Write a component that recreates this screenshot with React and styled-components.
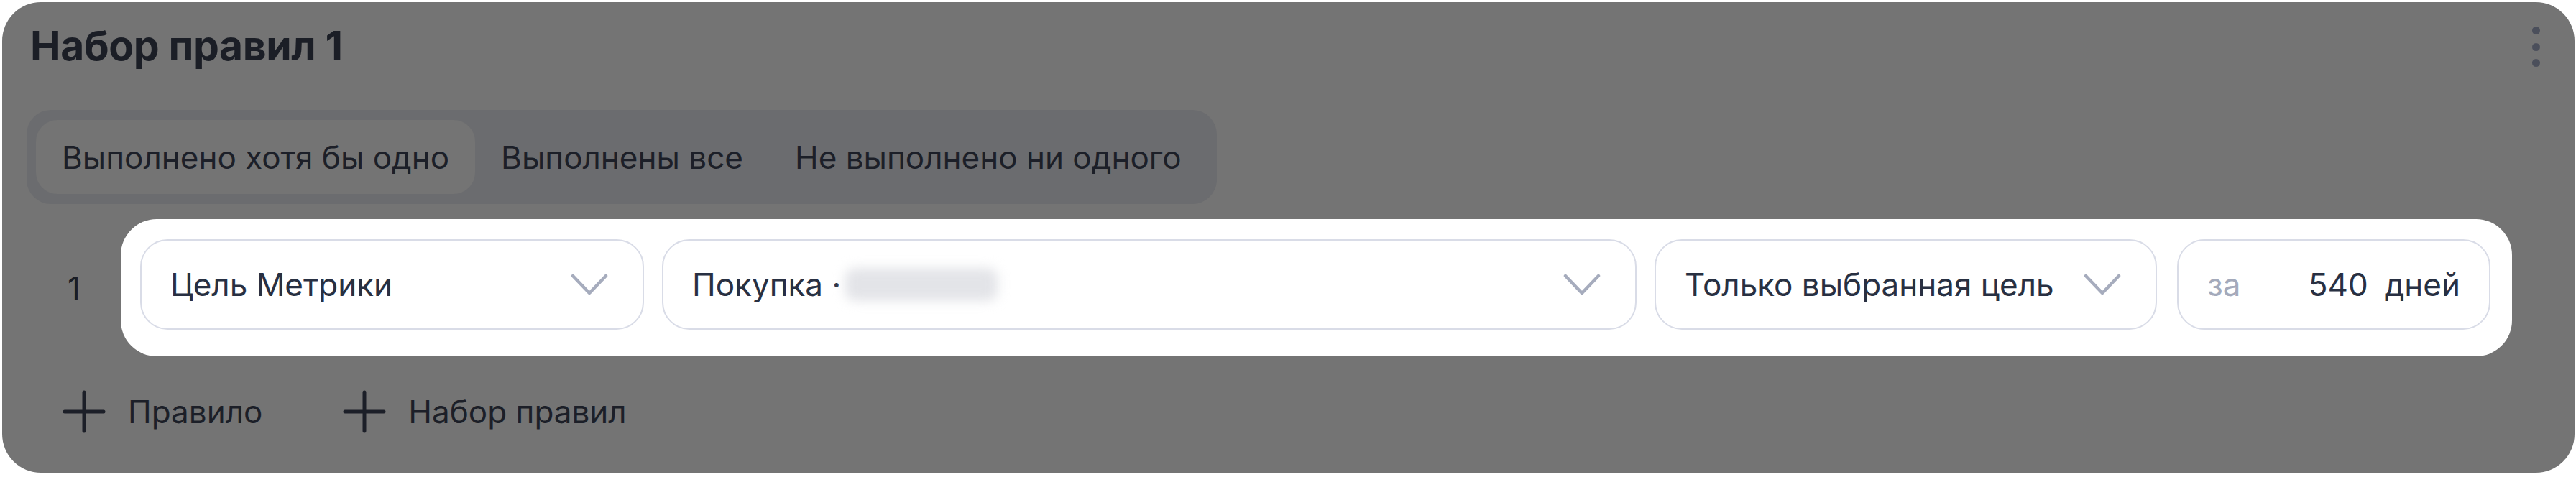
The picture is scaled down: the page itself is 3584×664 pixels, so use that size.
import React from "react";
import styled, { createGlobalStyle } from "styled-components";

const GlobalStyle = createGlobalStyle`
  html, body { margin: 0; padding: 0; background: #ffffff; }
  body { font-family: Inter, "Noto Sans", sans-serif; }
  * { box-sizing: border-box; }
`;

const Page = styled.div`
  padding: 3px 2px 0 3px;
`;

const Card = styled.section`
  height: 655px;
  background: #747474;
  border-radius: 54px;
  padding: 24px 34px 0 34px;
  display: flex;
  flex-direction: column;
`;

const Header = styled.div`
  height: 72px;
  display: flex;
  align-items: center;
  justify-content: space-between;
  padding-left: 5px;
  padding-right: 14px;
`;

const Title = styled.h2`
  margin: 0;
  font-size: 57px;
  font-weight: 700;
  letter-spacing: -0.4px;
  color: #1b1e26;
`;

const Kebab = styled.button`
  border: 0;
  background: transparent;
  padding: 0;
  width: 12px;
  height: 56px;
  display: flex;
  flex-direction: column;
  justify-content: space-between;
  align-items: center;
  margin-top: 4px;
`;

const Dot = styled.span`
  width: 11px;
  height: 11px;
  border-radius: 50%;
  background: #4b4f5b;
`;

const TabGroup = styled.div`
  margin-top: 54px;
  align-self: flex-start;
  display: flex;
  padding: 14px 13px;
  background: #6b6c6f;
  border-radius: 34px;
`;

const Tab = styled.button`
  height: 103px;
  padding: 0 36px;
  border: 0;
  border-radius: 30px;
  background: ${(p) => (p.$active ? "#747474" : "transparent")};
  font-family: Inter, "Noto Sans", sans-serif;
  font-size: 44px;
  color: #1c1f28;
  white-space: nowrap;
`;

const RuleLine = styled.div`
  margin-top: 21px;
  display: flex;
  align-items: center;
`;

const RuleNumber = styled.div`
  width: 131px;
  padding-left: 57px;
  font-size: 44px;
  color: #1a1d24;
`;

const Spotlight = styled.div`
  flex: 1;
  margin-right: 53px;
  background: #ffffff;
  border-radius: 50px;
  padding: 28px 30px 37px 27px;
  display: flex;
  gap: 25px;
`;

const Select = styled.div`
  height: 126px;
  flex: ${(p) => (p.$grow ? "1" : `0 0 ${p.$width}px`)};
  border: 2px solid #d9dce7;
  border-radius: 38px;
  display: flex;
  align-items: center;
  padding: 0 48px 0 40px;
  gap: 12px;
  font-size: 44px;
  color: #283042;
  white-space: nowrap;
`;

const SelectText = styled.span`
  flex: 1;
  display: flex;
  align-items: center;
  gap: 6px;
`;

const Hidden = styled.span`
  display: inline-block;
  width: 212px;
  height: 46px;
  border-radius: 14px;
  background: #e3e4e8;
  filter: blur(8px);
`;

const Chevron = () => (
  <svg width="52" height="30" viewBox="0 0 52 30" fill="none">
    <path d="M3 3 L26 27 L49 3" stroke="#a6acbd" strokeWidth="4.5" strokeLinecap="round" strokeLinejoin="round" />
  </svg>
);

const DaysField = styled.div`
  flex: 0 0 436px;
  margin-left: 3px;
  height: 126px;
  border: 2px solid #d9dce7;
  border-radius: 38px;
  display: flex;
  align-items: center;
  padding: 0 40px;
  font-size: 44px;
  color: #283042;
  white-space: nowrap;
`;

const Prefix = styled.span`
  flex: 1;
  color: #a4aabb;
`;

const Value = styled.span`
  margin-right: 23px;
`;

const Actions = styled.div`
  margin-top: 41px;
  height: 72px;
  display: flex;
  align-items: center;
  gap: 112px;
  padding-left: 50px;
`;

const AddButton = styled.button`
  border: 0;
  background: transparent;
  padding: 0;
  display: flex;
  align-items: center;
  gap: 31px;
  font-family: Inter, "Noto Sans", sans-serif;
  font-size: 44px;
  color: #1c1f28;
`;

const Plus = () => (
  <svg width="60" height="60" viewBox="0 0 60 60" fill="none">
    <path d="M30 3 V57 M3 30 H57" stroke="#1c1f28" strokeWidth="5" strokeLinecap="round" />
  </svg>
);

export default function App() {
  return (
    <>
      <GlobalStyle />
      <Page>
        <Card>
          <Header>
            <Title>Набор правил 1</Title>
            <Kebab aria-label="menu">
              <Dot />
              <Dot />
              <Dot />
            </Kebab>
          </Header>
          <TabGroup>
            <Tab $active>Выполнено хотя бы одно</Tab>
            <Tab>Выполнены все</Tab>
            <Tab>Не выполнено ни одного</Tab>
          </TabGroup>
          <RuleLine>
            <RuleNumber>1</RuleNumber>
            <Spotlight>
              <Select $width={701}>
                <SelectText>Цель Метрики</SelectText>
                <Chevron />
              </Select>
              <Select $grow>
                <SelectText>
                  Покупка · <Hidden />
                </SelectText>
                <Chevron />
              </Select>
              <Select $width={699}>
                <SelectText>Только выбранная цель</SelectText>
                <Chevron />
              </Select>
              <DaysField>
                <Prefix>за</Prefix>
                <Value>540</Value>
                <span>дней</span>
              </DaysField>
            </Spotlight>
          </RuleLine>
          <Actions>
            <AddButton>
              <Plus />
              Правило
            </AddButton>
            <AddButton>
              <Plus />
              Набор правил
            </AddButton>
          </Actions>
        </Card>
      </Page>
    </>
  );
}
